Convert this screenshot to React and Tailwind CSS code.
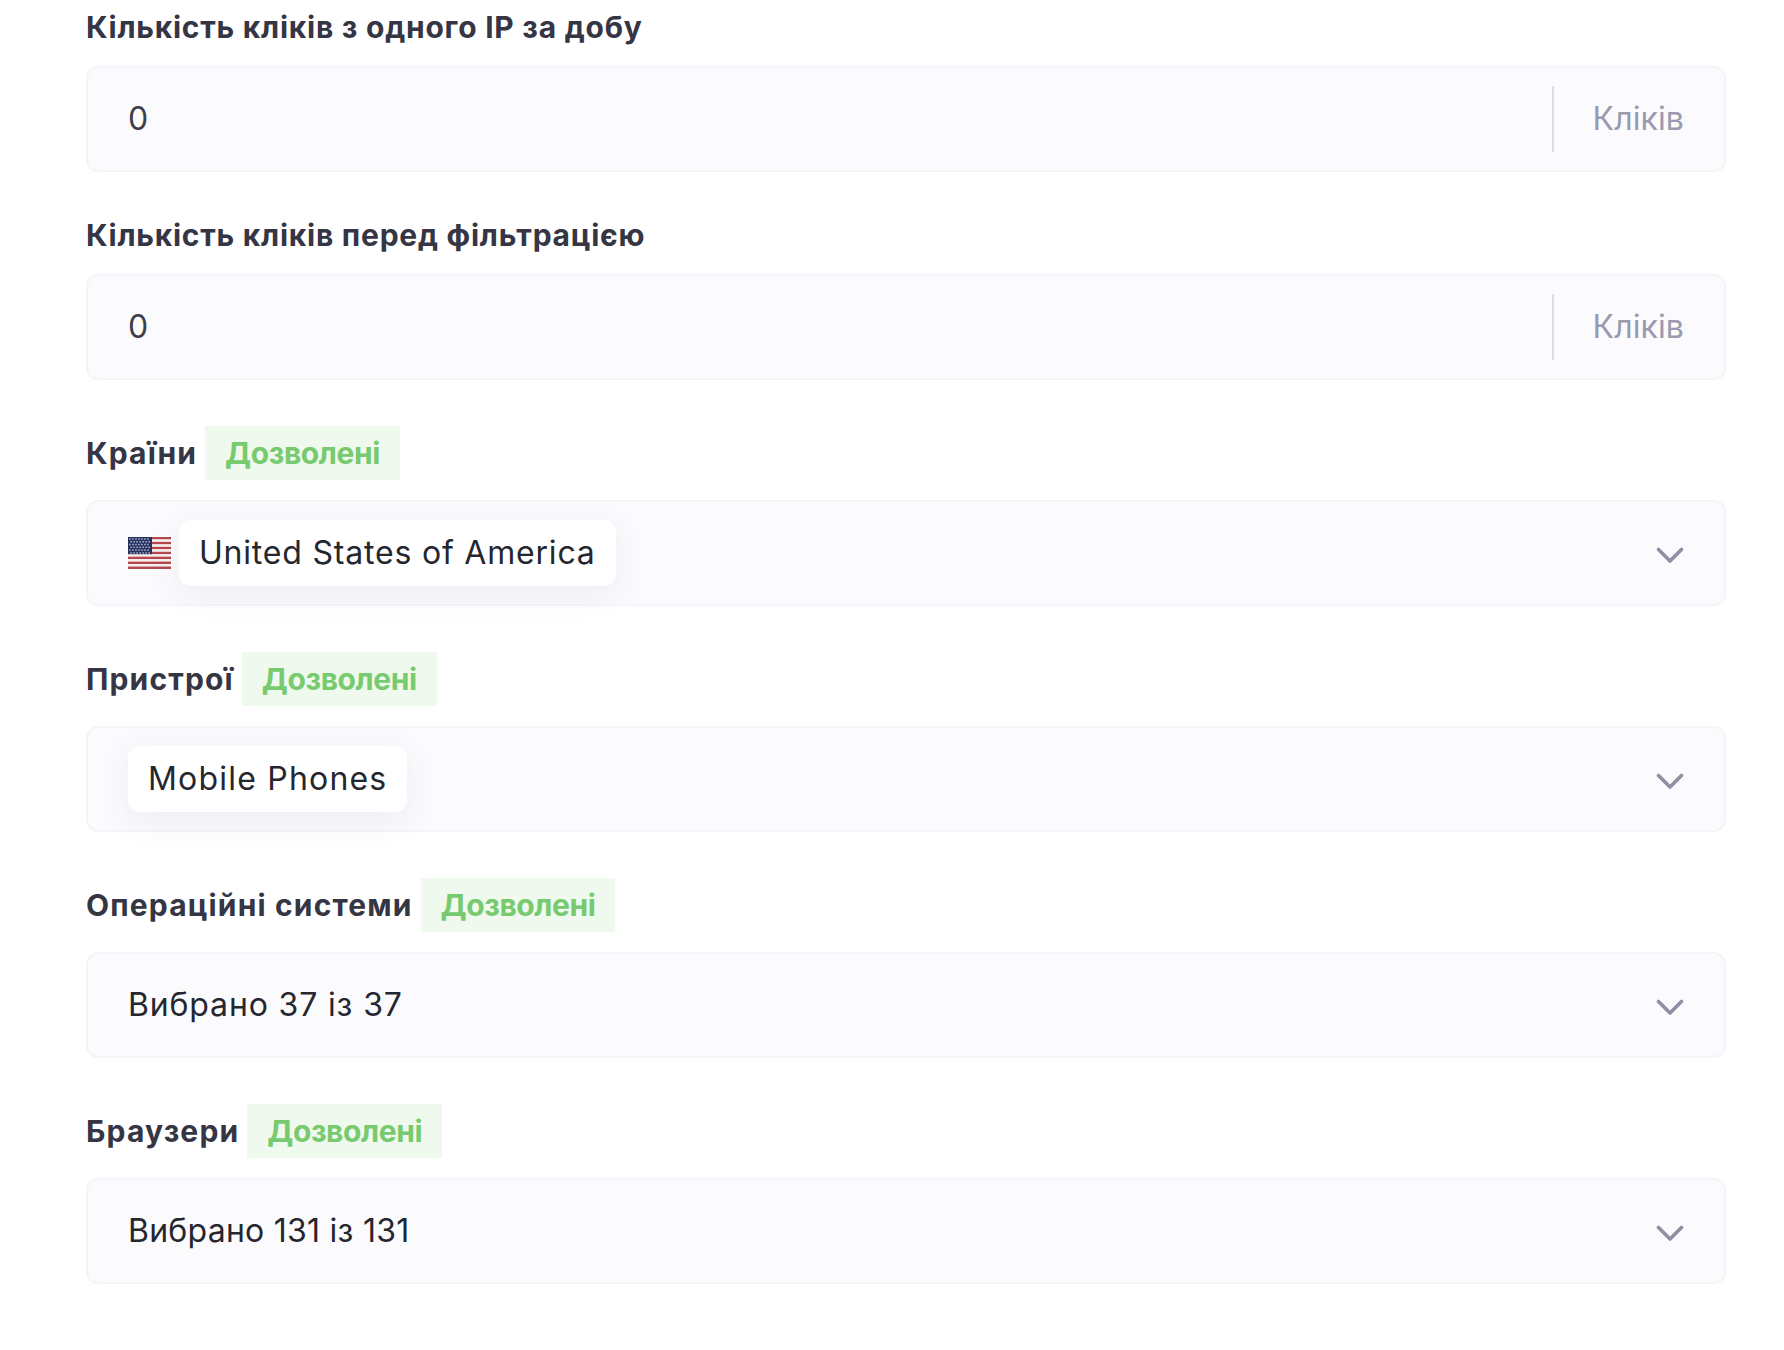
import React from 'react';

const FONT = { fontFamily: 'Inter, "Noto Sans", sans-serif' };

const Chevron = () => (
    <svg width="28" height="17" viewBox="0 0 28 17" fill="none" className="mt-1 shrink-0">
        <path d="M2.5 2.5L14 14L25.5 2.5" stroke="#8f8fa3" strokeWidth="3.6" strokeLinecap="round" strokeLinejoin="round" />
    </svg>
);

const UsFlag = () => {
    const stripes = [0, 1, 2, 3, 4, 5, 6, 7, 8, 9, 10, 11, 12];
    const stars = [];
    for (let row = 0; row < 6; row++) {
        for (let col = 0; col < 7; col++) {
            stars.push(<rect key={`${row}-${col}`} x={1.2 + col * 3 + (row % 2) * 1.2} y={1.2 + row * 2.8} width="1.5" height="1.5" fill="#aeb6d0" />);
        }
    }
    return (
        <svg width="43" height="32" viewBox="0 0 43 32" className="shrink-0">
            {stripes.map((i) => (
                <rect key={i} x="0" y={(i * 32) / 13} width="43" height={32 / 13} fill={i % 2 === 0 ? '#b5474d' : '#f7eeee'} />
            ))}
            <rect x="0" y="0" width="24" height="17.2" fill="#27315f" />
            {stars}
        </svg>
    );
};

const Badge = () => (
    <span className="flex h-[54px] items-center bg-[#f0f9ee] px-5 text-[30px] font-bold tracking-[-0.4px] text-[#77cb6e]">Дозволені</span>
);

const Chip = ({ children, className }) => (
    <span className={`flex h-[66px] items-center rounded-xl bg-white px-5 text-[32px] text-[#25262e] shadow-[0_8px_32px_rgba(60,60,100,0.08)] ${className}`}>
        {children}
    </span>
);

const Box = ({ children }) => (
    <div className="flex h-[106px] items-center rounded-xl border-2 border-[#f4f4f9] bg-[#fbfbfe] pl-10 pr-10">{children}</div>
);

const ClicksField = ({ label }) => (
    <div className="mb-9">
        <div className="mb-3 flex h-[54px] items-center text-[30px] font-bold tracking-[0.75px] text-[#353544]">{label}</div>
        <Box>
            <span className="flex-1 text-[32px] text-[#3f3f4b]">0</span>
            <span className="h-[66px] w-0.5 bg-[#dcdce7]" />
            <span className="w-[130px] text-right text-[32px] tracking-[0.1px] text-[#9a9aaf]">Кліків</span>
        </Box>
    </div>
);

const SelectField = ({ label, children }) => (
    <div className="mt-[46px]">
        <div className="mb-5 flex h-[54px] items-center gap-2 text-[30px] font-bold tracking-[1.15px] text-[#353544]">
            <span>{label}</span>
            <Badge />
        </div>
        <Box>
            <div className="flex flex-1 items-center gap-2">{children}</div>
            <Chevron />
        </Box>
    </div>
);

const App = () => {
    return (
        <div className="h-[1350px] bg-white pl-[86px] pr-[58px]" style={FONT}>
            <ClicksField label="Кількість кліків з одного IP за добу" />
            <ClicksField label="Кількість кліків перед фільтрацією" />
            <SelectField label="Країни">
                <UsFlag />
                <Chip className="tracking-[0.8px]">United States of America</Chip>
            </SelectField>
            <SelectField label="Пристрої">
                <Chip className="tracking-[1.2px]">Mobile Phones</Chip>
            </SelectField>
            <SelectField label="Операційні системи">
                <span className="text-[32px] tracking-[0.85px] text-[#25262e]">Вибрано 37 із 37</span>
            </SelectField>
            <SelectField label="Браузери">
                <span className="text-[32px] tracking-[0.25px] text-[#25262e]">Вибрано 131 із 131</span>
            </SelectField>
        </div>
    );
};

export default App;
